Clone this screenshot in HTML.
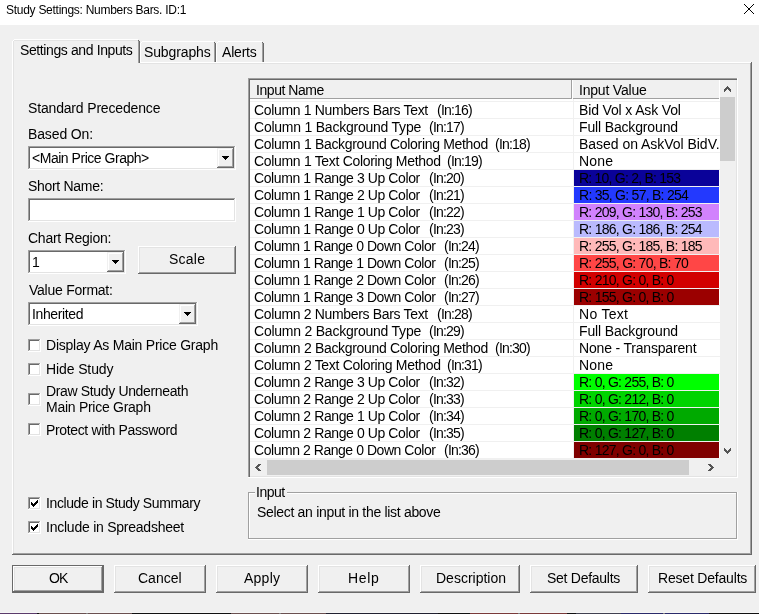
<!DOCTYPE html>
<html><head><meta charset="utf-8"><style>
html,body{margin:0;padding:0;}
body{width:759px;height:614px;overflow:hidden;background:#f0f0f0;position:relative;font-family:"Liberation Sans",sans-serif;}
i{position:absolute;display:block;}
b{will-change:transform;position:absolute;font-weight:normal;white-space:pre;font-size:14px;line-height:15px;color:#000;}
svg{display:block;}
</style></head><body>
<i style="left:0px;top:0px;width:759px;height:25px;background:#ffffff"></i>
<b style="left:6px;top:3px;font-size:12px;letter-spacing:-0.273px">Study Settings: Numbers Bars. ID:1</b>
<i style="left:744px;top:4px;width:1px;height:1px;background:#000"></i>
<i style="left:753px;top:4px;width:1px;height:1px;background:#000"></i>
<i style="left:745px;top:5px;width:1px;height:1px;background:#000"></i>
<i style="left:752px;top:5px;width:1px;height:1px;background:#000"></i>
<i style="left:746px;top:6px;width:1px;height:1px;background:#000"></i>
<i style="left:751px;top:6px;width:1px;height:1px;background:#000"></i>
<i style="left:747px;top:7px;width:1px;height:1px;background:#000"></i>
<i style="left:750px;top:7px;width:1px;height:1px;background:#000"></i>
<i style="left:748px;top:8px;width:1px;height:1px;background:#000"></i>
<i style="left:749px;top:8px;width:1px;height:1px;background:#000"></i>
<i style="left:749px;top:9px;width:1px;height:1px;background:#000"></i>
<i style="left:748px;top:9px;width:1px;height:1px;background:#000"></i>
<i style="left:750px;top:10px;width:1px;height:1px;background:#000"></i>
<i style="left:747px;top:10px;width:1px;height:1px;background:#000"></i>
<i style="left:751px;top:11px;width:1px;height:1px;background:#000"></i>
<i style="left:746px;top:11px;width:1px;height:1px;background:#000"></i>
<i style="left:752px;top:12px;width:1px;height:1px;background:#000"></i>
<i style="left:745px;top:12px;width:1px;height:1px;background:#000"></i>
<i style="left:753px;top:13px;width:1px;height:1px;background:#000"></i>
<i style="left:744px;top:13px;width:1px;height:1px;background:#000"></i>
<i style="left:12px;top:62px;width:739px;height:1px;background:#ffffff"></i>
<i style="left:12px;top:62px;width:1px;height:492px;background:#ffffff"></i>
<i style="left:750px;top:63px;width:1px;height:491px;background:#a0a0a0"></i>
<i style="left:751px;top:62px;width:1px;height:493px;background:#696969"></i>
<i style="left:13px;top:553px;width:738px;height:1px;background:#a0a0a0"></i>
<i style="left:12px;top:554px;width:740px;height:1px;background:#696969"></i>
<i style="left:140px;top:63px;width:610px;height:1px;background:#e3e3e3"></i>
<i style="left:13px;top:63px;width:1px;height:490px;background:#e3e3e3"></i>
<i style="left:140px;top:41px;width:76px;height:21px;background:#f0f0f0"></i>
<i style="left:142px;top:41px;width:72px;height:1px;background:#ffffff"></i>
<i style="left:140px;top:43px;width:1px;height:19px;background:#ffffff"></i>
<i style="left:141px;top:42px;width:1px;height:1px;background:#ffffff"></i>
<i style="left:214px;top:43px;width:1px;height:19px;background:#a0a0a0"></i>
<i style="left:215px;top:43px;width:1px;height:19px;background:#696969"></i>
<i style="left:214px;top:42px;width:1px;height:1px;background:#696969"></i>
<b style="left:144px;top:45px;font-size:14px;letter-spacing:-0.125px">Subgraphs</b>
<i style="left:216px;top:41px;width:48px;height:21px;background:#f0f0f0"></i>
<i style="left:218px;top:41px;width:44px;height:1px;background:#ffffff"></i>
<i style="left:216px;top:43px;width:1px;height:19px;background:#ffffff"></i>
<i style="left:217px;top:42px;width:1px;height:1px;background:#ffffff"></i>
<i style="left:262px;top:43px;width:1px;height:19px;background:#a0a0a0"></i>
<i style="left:263px;top:43px;width:1px;height:19px;background:#696969"></i>
<i style="left:262px;top:42px;width:1px;height:1px;background:#696969"></i>
<b style="left:222px;top:45px;font-size:14px;letter-spacing:-0.2px">Alerts</b>
<i style="left:12px;top:39px;width:128px;height:24px;background:#f0f0f0"></i>
<i style="left:14px;top:39px;width:124px;height:1px;background:#ffffff"></i>
<i style="left:12px;top:41px;width:1px;height:22px;background:#ffffff"></i>
<i style="left:13px;top:40px;width:1px;height:1px;background:#ffffff"></i>
<i style="left:138px;top:41px;width:1px;height:22px;background:#a0a0a0"></i>
<i style="left:139px;top:41px;width:1px;height:22px;background:#696969"></i>
<i style="left:138px;top:40px;width:1px;height:1px;background:#696969"></i>
<i style="left:13px;top:41px;width:1px;height:23px;background:#e3e3e3"></i>
<i style="left:14px;top:40px;width:124px;height:1px;background:#e3e3e3"></i>
<b style="left:20px;top:43px;font-size:14px;letter-spacing:-0.389px">Settings and Inputs</b>
<b style="left:28px;top:101px;font-size:14px;letter-spacing:-0.167px">Standard Precedence</b>
<b style="left:28px;top:127px;font-size:14px;letter-spacing:-0.125px">Based On:</b>
<i style="left:28px;top:146px;width:208px;height:24px;background:#fff"></i>
<i style="left:28px;top:146px;width:208px;height:1px;background:#a0a0a0"></i>
<i style="left:28px;top:146px;width:1px;height:24px;background:#a0a0a0"></i>
<i style="left:28px;top:169px;width:208px;height:1px;background:#ffffff"></i>
<i style="left:235px;top:146px;width:1px;height:24px;background:#ffffff"></i>
<i style="left:29px;top:147px;width:206px;height:1px;background:#696969"></i>
<i style="left:29px;top:147px;width:1px;height:22px;background:#696969"></i>
<i style="left:29px;top:168px;width:206px;height:1px;background:#e3e3e3"></i>
<i style="left:234px;top:147px;width:1px;height:22px;background:#e3e3e3"></i>
<i style="left:217px;top:148px;width:17px;height:20px;background:#f0f0f0"></i>
<i style="left:217px;top:167px;width:17px;height:1px;background:#696969"></i>
<i style="left:233px;top:148px;width:1px;height:20px;background:#696969"></i>
<i style="left:218px;top:149px;width:15px;height:1px;background:#ffffff"></i>
<i style="left:218px;top:149px;width:1px;height:18px;background:#ffffff"></i>
<i style="left:218px;top:166px;width:15px;height:1px;background:#a0a0a0"></i>
<i style="left:232px;top:149px;width:1px;height:18px;background:#a0a0a0"></i>
<i style="left:222px;top:156px;width:7px;height:1px;background:#000"></i>
<i style="left:223px;top:157px;width:5px;height:1px;background:#000"></i>
<i style="left:224px;top:158px;width:3px;height:1px;background:#000"></i>
<i style="left:225px;top:159px;width:1px;height:1px;background:#000"></i>
<b style="left:32px;top:151px;font-size:14px;letter-spacing:-0.471px">&lt;Main Price Graph&gt;</b>
<b style="left:28px;top:179px;font-size:14px;letter-spacing:-0.3px">Short Name:</b>
<i style="left:28px;top:198px;width:208px;height:24px;background:#fff"></i>
<i style="left:28px;top:198px;width:208px;height:1px;background:#a0a0a0"></i>
<i style="left:28px;top:198px;width:1px;height:24px;background:#a0a0a0"></i>
<i style="left:28px;top:221px;width:208px;height:1px;background:#ffffff"></i>
<i style="left:235px;top:198px;width:1px;height:24px;background:#ffffff"></i>
<i style="left:29px;top:199px;width:206px;height:1px;background:#696969"></i>
<i style="left:29px;top:199px;width:1px;height:22px;background:#696969"></i>
<i style="left:29px;top:220px;width:206px;height:1px;background:#e3e3e3"></i>
<i style="left:234px;top:199px;width:1px;height:22px;background:#e3e3e3"></i>
<b style="left:28px;top:231px;font-size:14px;letter-spacing:-0.25px">Chart Region:</b>
<i style="left:28px;top:250px;width:98px;height:24px;background:#fff"></i>
<i style="left:28px;top:250px;width:98px;height:1px;background:#a0a0a0"></i>
<i style="left:28px;top:250px;width:1px;height:24px;background:#a0a0a0"></i>
<i style="left:28px;top:273px;width:98px;height:1px;background:#ffffff"></i>
<i style="left:125px;top:250px;width:1px;height:24px;background:#ffffff"></i>
<i style="left:29px;top:251px;width:96px;height:1px;background:#696969"></i>
<i style="left:29px;top:251px;width:1px;height:22px;background:#696969"></i>
<i style="left:29px;top:272px;width:96px;height:1px;background:#e3e3e3"></i>
<i style="left:124px;top:251px;width:1px;height:22px;background:#e3e3e3"></i>
<i style="left:107px;top:252px;width:17px;height:20px;background:#f0f0f0"></i>
<i style="left:107px;top:271px;width:17px;height:1px;background:#696969"></i>
<i style="left:123px;top:252px;width:1px;height:20px;background:#696969"></i>
<i style="left:108px;top:253px;width:15px;height:1px;background:#ffffff"></i>
<i style="left:108px;top:253px;width:1px;height:18px;background:#ffffff"></i>
<i style="left:108px;top:270px;width:15px;height:1px;background:#a0a0a0"></i>
<i style="left:122px;top:253px;width:1px;height:18px;background:#a0a0a0"></i>
<i style="left:112px;top:260px;width:7px;height:1px;background:#000"></i>
<i style="left:113px;top:261px;width:5px;height:1px;background:#000"></i>
<i style="left:114px;top:262px;width:3px;height:1px;background:#000"></i>
<i style="left:115px;top:263px;width:1px;height:1px;background:#000"></i>
<b style="left:32px;top:255px;font-size:14px;letter-spacing:0px">1</b>
<i style="left:138px;top:246px;width:98px;height:28px;background:#f0f0f0"></i>
<i style="left:138px;top:246px;width:98px;height:1px;background:#ffffff"></i>
<i style="left:138px;top:246px;width:1px;height:28px;background:#ffffff"></i>
<i style="left:138px;top:273px;width:98px;height:1px;background:#696969"></i>
<i style="left:235px;top:246px;width:1px;height:28px;background:#696969"></i>
<i style="left:139px;top:247px;width:96px;height:1px;background:#e3e3e3"></i>
<i style="left:139px;top:247px;width:1px;height:26px;background:#e3e3e3"></i>
<i style="left:139px;top:272px;width:96px;height:1px;background:#a0a0a0"></i>
<i style="left:234px;top:247px;width:1px;height:26px;background:#a0a0a0"></i>
<b style="left:169px;top:252px;font-size:14px;letter-spacing:0.25px">Scale</b>
<b style="left:29px;top:283px;font-size:14px;letter-spacing:-0.25px">Value Format:</b>
<i style="left:28px;top:302px;width:170px;height:24px;background:#fff"></i>
<i style="left:28px;top:302px;width:170px;height:1px;background:#a0a0a0"></i>
<i style="left:28px;top:302px;width:1px;height:24px;background:#a0a0a0"></i>
<i style="left:28px;top:325px;width:170px;height:1px;background:#ffffff"></i>
<i style="left:197px;top:302px;width:1px;height:24px;background:#ffffff"></i>
<i style="left:29px;top:303px;width:168px;height:1px;background:#696969"></i>
<i style="left:29px;top:303px;width:1px;height:22px;background:#696969"></i>
<i style="left:29px;top:324px;width:168px;height:1px;background:#e3e3e3"></i>
<i style="left:196px;top:303px;width:1px;height:22px;background:#e3e3e3"></i>
<i style="left:179px;top:304px;width:17px;height:20px;background:#f0f0f0"></i>
<i style="left:179px;top:323px;width:17px;height:1px;background:#696969"></i>
<i style="left:195px;top:304px;width:1px;height:20px;background:#696969"></i>
<i style="left:180px;top:305px;width:15px;height:1px;background:#ffffff"></i>
<i style="left:180px;top:305px;width:1px;height:18px;background:#ffffff"></i>
<i style="left:180px;top:322px;width:15px;height:1px;background:#a0a0a0"></i>
<i style="left:194px;top:305px;width:1px;height:18px;background:#a0a0a0"></i>
<i style="left:184px;top:312px;width:7px;height:1px;background:#000"></i>
<i style="left:185px;top:313px;width:5px;height:1px;background:#000"></i>
<i style="left:186px;top:314px;width:3px;height:1px;background:#000"></i>
<i style="left:187px;top:315px;width:1px;height:1px;background:#000"></i>
<b style="left:32px;top:307px;font-size:14px;letter-spacing:-0.375px">Inherited</b>
<i style="left:28px;top:339px;width:13px;height:13px;background:#fff"></i>
<i style="left:28px;top:339px;width:13px;height:1px;background:#a0a0a0"></i>
<i style="left:28px;top:339px;width:1px;height:13px;background:#a0a0a0"></i>
<i style="left:28px;top:351px;width:13px;height:1px;background:#ffffff"></i>
<i style="left:40px;top:339px;width:1px;height:13px;background:#ffffff"></i>
<i style="left:29px;top:340px;width:11px;height:1px;background:#696969"></i>
<i style="left:29px;top:340px;width:1px;height:11px;background:#696969"></i>
<i style="left:29px;top:350px;width:11px;height:1px;background:#e3e3e3"></i>
<i style="left:39px;top:340px;width:1px;height:11px;background:#e3e3e3"></i>
<b style="left:46px;top:338px;font-size:14px;letter-spacing:-0.231px">Display As Main Price Graph</b>
<i style="left:28px;top:363px;width:13px;height:13px;background:#fff"></i>
<i style="left:28px;top:363px;width:13px;height:1px;background:#a0a0a0"></i>
<i style="left:28px;top:363px;width:1px;height:13px;background:#a0a0a0"></i>
<i style="left:28px;top:375px;width:13px;height:1px;background:#ffffff"></i>
<i style="left:40px;top:363px;width:1px;height:13px;background:#ffffff"></i>
<i style="left:29px;top:364px;width:11px;height:1px;background:#696969"></i>
<i style="left:29px;top:364px;width:1px;height:11px;background:#696969"></i>
<i style="left:29px;top:374px;width:11px;height:1px;background:#e3e3e3"></i>
<i style="left:39px;top:364px;width:1px;height:11px;background:#e3e3e3"></i>
<b style="left:46px;top:362px;font-size:14px;letter-spacing:-0.111px">Hide Study</b>
<i style="left:28px;top:393px;width:13px;height:13px;background:#fff"></i>
<i style="left:28px;top:393px;width:13px;height:1px;background:#a0a0a0"></i>
<i style="left:28px;top:393px;width:1px;height:13px;background:#a0a0a0"></i>
<i style="left:28px;top:405px;width:13px;height:1px;background:#ffffff"></i>
<i style="left:40px;top:393px;width:1px;height:13px;background:#ffffff"></i>
<i style="left:29px;top:394px;width:11px;height:1px;background:#696969"></i>
<i style="left:29px;top:394px;width:1px;height:11px;background:#696969"></i>
<i style="left:29px;top:404px;width:11px;height:1px;background:#e3e3e3"></i>
<i style="left:39px;top:394px;width:1px;height:11px;background:#e3e3e3"></i>
<b style="left:46px;top:384px;font-size:14px;letter-spacing:-0.35px">Draw Study Underneath</b>
<b style="left:46px;top:400px;font-size:14px;letter-spacing:-0.267px">Main Price Graph</b>
<i style="left:28px;top:423px;width:13px;height:13px;background:#fff"></i>
<i style="left:28px;top:423px;width:13px;height:1px;background:#a0a0a0"></i>
<i style="left:28px;top:423px;width:1px;height:13px;background:#a0a0a0"></i>
<i style="left:28px;top:435px;width:13px;height:1px;background:#ffffff"></i>
<i style="left:40px;top:423px;width:1px;height:13px;background:#ffffff"></i>
<i style="left:29px;top:424px;width:11px;height:1px;background:#696969"></i>
<i style="left:29px;top:424px;width:1px;height:11px;background:#696969"></i>
<i style="left:29px;top:434px;width:11px;height:1px;background:#e3e3e3"></i>
<i style="left:39px;top:424px;width:1px;height:11px;background:#e3e3e3"></i>
<b style="left:46px;top:423px;font-size:14px;letter-spacing:-0.35px">Protect with Password</b>
<i style="left:28px;top:497px;width:13px;height:13px;background:#fff"></i>
<i style="left:28px;top:497px;width:13px;height:1px;background:#a0a0a0"></i>
<i style="left:28px;top:497px;width:1px;height:13px;background:#a0a0a0"></i>
<i style="left:28px;top:509px;width:13px;height:1px;background:#ffffff"></i>
<i style="left:40px;top:497px;width:1px;height:13px;background:#ffffff"></i>
<i style="left:29px;top:498px;width:11px;height:1px;background:#696969"></i>
<i style="left:29px;top:498px;width:1px;height:11px;background:#696969"></i>
<i style="left:29px;top:508px;width:11px;height:1px;background:#e3e3e3"></i>
<i style="left:39px;top:498px;width:1px;height:11px;background:#e3e3e3"></i>
<i style="left:37px;top:500px;width:1px;height:1px;background:#000"></i>
<i style="left:36px;top:501px;width:1px;height:1px;background:#000"></i>
<i style="left:37px;top:501px;width:1px;height:1px;background:#000"></i>
<i style="left:31px;top:502px;width:1px;height:1px;background:#000"></i>
<i style="left:35px;top:502px;width:1px;height:1px;background:#000"></i>
<i style="left:36px;top:502px;width:1px;height:1px;background:#000"></i>
<i style="left:37px;top:502px;width:1px;height:1px;background:#000"></i>
<i style="left:31px;top:503px;width:1px;height:1px;background:#000"></i>
<i style="left:32px;top:503px;width:1px;height:1px;background:#000"></i>
<i style="left:34px;top:503px;width:1px;height:1px;background:#000"></i>
<i style="left:35px;top:503px;width:1px;height:1px;background:#000"></i>
<i style="left:36px;top:503px;width:1px;height:1px;background:#000"></i>
<i style="left:31px;top:504px;width:1px;height:1px;background:#000"></i>
<i style="left:32px;top:504px;width:1px;height:1px;background:#000"></i>
<i style="left:33px;top:504px;width:1px;height:1px;background:#000"></i>
<i style="left:34px;top:504px;width:1px;height:1px;background:#000"></i>
<i style="left:35px;top:504px;width:1px;height:1px;background:#000"></i>
<i style="left:32px;top:505px;width:1px;height:1px;background:#000"></i>
<i style="left:33px;top:505px;width:1px;height:1px;background:#000"></i>
<i style="left:34px;top:505px;width:1px;height:1px;background:#000"></i>
<i style="left:33px;top:506px;width:1px;height:1px;background:#000"></i>
<b style="left:46px;top:496px;font-size:14px;letter-spacing:-0.391px">Include in Study Summary</b>
<i style="left:28px;top:521px;width:13px;height:13px;background:#fff"></i>
<i style="left:28px;top:521px;width:13px;height:1px;background:#a0a0a0"></i>
<i style="left:28px;top:521px;width:1px;height:13px;background:#a0a0a0"></i>
<i style="left:28px;top:533px;width:13px;height:1px;background:#ffffff"></i>
<i style="left:40px;top:521px;width:1px;height:13px;background:#ffffff"></i>
<i style="left:29px;top:522px;width:11px;height:1px;background:#696969"></i>
<i style="left:29px;top:522px;width:1px;height:11px;background:#696969"></i>
<i style="left:29px;top:532px;width:11px;height:1px;background:#e3e3e3"></i>
<i style="left:39px;top:522px;width:1px;height:11px;background:#e3e3e3"></i>
<i style="left:37px;top:524px;width:1px;height:1px;background:#000"></i>
<i style="left:36px;top:525px;width:1px;height:1px;background:#000"></i>
<i style="left:37px;top:525px;width:1px;height:1px;background:#000"></i>
<i style="left:31px;top:526px;width:1px;height:1px;background:#000"></i>
<i style="left:35px;top:526px;width:1px;height:1px;background:#000"></i>
<i style="left:36px;top:526px;width:1px;height:1px;background:#000"></i>
<i style="left:37px;top:526px;width:1px;height:1px;background:#000"></i>
<i style="left:31px;top:527px;width:1px;height:1px;background:#000"></i>
<i style="left:32px;top:527px;width:1px;height:1px;background:#000"></i>
<i style="left:34px;top:527px;width:1px;height:1px;background:#000"></i>
<i style="left:35px;top:527px;width:1px;height:1px;background:#000"></i>
<i style="left:36px;top:527px;width:1px;height:1px;background:#000"></i>
<i style="left:31px;top:528px;width:1px;height:1px;background:#000"></i>
<i style="left:32px;top:528px;width:1px;height:1px;background:#000"></i>
<i style="left:33px;top:528px;width:1px;height:1px;background:#000"></i>
<i style="left:34px;top:528px;width:1px;height:1px;background:#000"></i>
<i style="left:35px;top:528px;width:1px;height:1px;background:#000"></i>
<i style="left:32px;top:529px;width:1px;height:1px;background:#000"></i>
<i style="left:33px;top:529px;width:1px;height:1px;background:#000"></i>
<i style="left:34px;top:529px;width:1px;height:1px;background:#000"></i>
<i style="left:33px;top:530px;width:1px;height:1px;background:#000"></i>
<b style="left:46px;top:520px;font-size:14px;letter-spacing:-0.238px">Include in Spreadsheet</b>
<i style="left:248px;top:78px;width:490px;height:400px;background:#ffffff"></i>
<i style="left:248px;top:78px;width:490px;height:1px;background:#a0a0a0"></i>
<i style="left:248px;top:78px;width:1px;height:400px;background:#a0a0a0"></i>
<i style="left:249px;top:79px;width:488px;height:1px;background:#696969"></i>
<i style="left:249px;top:79px;width:1px;height:398px;background:#696969"></i>
<i style="left:248px;top:477px;width:490px;height:1px;background:#ffffff"></i>
<i style="left:737px;top:78px;width:1px;height:400px;background:#ffffff"></i>
<i style="left:250px;top:476px;width:487px;height:1px;background:#e3e3e3"></i>
<i style="left:736px;top:80px;width:1px;height:397px;background:#e3e3e3"></i>
<i style="left:250px;top:80px;width:470px;height:19px;background:#f0f0f0"></i>
<i style="left:250px;top:98px;width:322px;height:1px;background:#a0a0a0"></i>
<i style="left:571px;top:80px;width:1px;height:19px;background:#a0a0a0"></i>
<i style="left:572px;top:80px;width:1px;height:19px;background:#ffffff"></i>
<i style="left:573px;top:98px;width:146px;height:1px;background:#a0a0a0"></i>
<i style="left:719px;top:80px;width:1px;height:19px;background:#ffffff"></i>
<b style="left:256px;top:83px;font-size:14px;letter-spacing:-0.444px">Input Name</b>
<b style="left:579px;top:83px;font-size:14px;letter-spacing:-0.2px">Input Value</b>
<i style="left:250px;top:101px;width:470px;height:1px;background:#f0f0f0"></i>
<b style="left:254px;top:103px;font-size:14px;letter-spacing:-0.336px">Column 1 Numbers Bars Text</b>
<b style="left:437px;top:103px;font-size:14px;letter-spacing:-0.783px">(In:16)</b>
<b style="left:579px;top:103px;font-size:14px;letter-spacing:-0.144px;width:140px;overflow:hidden">Bid Vol x Ask Vol</b>
<i style="left:250px;top:118px;width:470px;height:1px;background:#f0f0f0"></i>
<b style="left:254px;top:120px;font-size:14px;letter-spacing:-0.23px">Column 1 Background Type</b>
<b style="left:429px;top:120px;font-size:14px;letter-spacing:-0.783px">(In:17)</b>
<b style="left:579px;top:120px;font-size:14px;letter-spacing:-0.15px;width:140px;overflow:hidden">Full Background</b>
<i style="left:250px;top:135px;width:470px;height:1px;background:#f0f0f0"></i>
<b style="left:254px;top:137px;font-size:14px;letter-spacing:-0.318px">Column 1 Background Coloring Method</b>
<b style="left:495px;top:137px;font-size:14px;letter-spacing:-0.783px">(In:18)</b>
<b style="left:579px;top:137px;font-size:14px;letter-spacing:-0.03px;width:140px;overflow:hidden">Based on AskVol BidV.</b>
<i style="left:250px;top:152px;width:470px;height:1px;background:#f0f0f0"></i>
<b style="left:254px;top:154px;font-size:14px;letter-spacing:-0.318px">Column 1 Text Coloring Method</b>
<b style="left:447px;top:154px;font-size:14px;letter-spacing:-0.783px">(In:19)</b>
<b style="left:579px;top:154px;font-size:14px;letter-spacing:0.2px;width:140px;overflow:hidden">None</b>
<i style="left:250px;top:169px;width:470px;height:1px;background:#f0f0f0"></i>
<i style="left:574px;top:170px;width:145px;height:16px;background:rgb(10,2,153)"></i>
<b style="left:254px;top:171px;font-size:14px;letter-spacing:-0.404px">Column 1 Range 3 Up Color</b>
<b style="left:429px;top:171px;font-size:14px;letter-spacing:-0.783px">(In:20)</b>
<b style="left:579px;top:171px;font-size:14px;letter-spacing:-0.772px;width:140px;overflow:hidden">R: 10, G: 2, B: 153</b>
<i style="left:250px;top:186px;width:470px;height:1px;background:#f0f0f0"></i>
<i style="left:574px;top:187px;width:145px;height:16px;background:rgb(35,57,254)"></i>
<b style="left:254px;top:188px;font-size:14px;letter-spacing:-0.404px">Column 1 Range 2 Up Color</b>
<b style="left:429px;top:188px;font-size:14px;letter-spacing:-0.783px">(In:21)</b>
<b style="left:579px;top:188px;font-size:14px;letter-spacing:-0.732px;width:140px;overflow:hidden">R: 35, G: 57, B: 254</b>
<i style="left:250px;top:203px;width:470px;height:1px;background:#f0f0f0"></i>
<i style="left:574px;top:204px;width:145px;height:16px;background:rgb(209,130,253)"></i>
<b style="left:254px;top:205px;font-size:14px;letter-spacing:-0.404px">Column 1 Range 1 Up Color</b>
<b style="left:429px;top:205px;font-size:14px;letter-spacing:-0.783px">(In:22)</b>
<b style="left:579px;top:205px;font-size:14px;letter-spacing:-0.752px;width:140px;overflow:hidden">R: 209, G: 130, B: 253</b>
<i style="left:250px;top:220px;width:470px;height:1px;background:#f0f0f0"></i>
<i style="left:574px;top:221px;width:145px;height:16px;background:rgb(186,186,254)"></i>
<b style="left:254px;top:222px;font-size:14px;letter-spacing:-0.404px">Column 1 Range 0 Up Color</b>
<b style="left:429px;top:222px;font-size:14px;letter-spacing:-0.783px">(In:23)</b>
<b style="left:579px;top:222px;font-size:14px;letter-spacing:-0.752px;width:140px;overflow:hidden">R: 186, G: 186, B: 254</b>
<i style="left:250px;top:237px;width:470px;height:1px;background:#f0f0f0"></i>
<i style="left:574px;top:238px;width:145px;height:16px;background:rgb(255,185,185)"></i>
<b style="left:254px;top:239px;font-size:14px;letter-spacing:-0.454px">Column 1 Range 0 Down Color</b>
<b style="left:444px;top:239px;font-size:14px;letter-spacing:-0.783px">(In:24)</b>
<b style="left:579px;top:239px;font-size:14px;letter-spacing:-0.752px;width:140px;overflow:hidden">R: 255, G: 185, B: 185</b>
<i style="left:250px;top:254px;width:470px;height:1px;background:#f0f0f0"></i>
<i style="left:574px;top:255px;width:145px;height:16px;background:rgb(255,70,70)"></i>
<b style="left:254px;top:256px;font-size:14px;letter-spacing:-0.454px">Column 1 Range 1 Down Color</b>
<b style="left:444px;top:256px;font-size:14px;letter-spacing:-0.783px">(In:25)</b>
<b style="left:579px;top:256px;font-size:14px;letter-spacing:-0.737px;width:140px;overflow:hidden">R: 255, G: 70, B: 70</b>
<i style="left:250px;top:271px;width:470px;height:1px;background:#f0f0f0"></i>
<i style="left:574px;top:272px;width:145px;height:16px;background:rgb(210,0,0)"></i>
<b style="left:254px;top:273px;font-size:14px;letter-spacing:-0.454px">Column 1 Range 2 Down Color</b>
<b style="left:444px;top:273px;font-size:14px;letter-spacing:-0.783px">(In:26)</b>
<b style="left:579px;top:273px;font-size:14px;letter-spacing:-0.753px;width:140px;overflow:hidden">R: 210, G: 0, B: 0</b>
<i style="left:250px;top:288px;width:470px;height:1px;background:#f0f0f0"></i>
<i style="left:574px;top:289px;width:145px;height:16px;background:rgb(155,0,0)"></i>
<b style="left:254px;top:290px;font-size:14px;letter-spacing:-0.454px">Column 1 Range 3 Down Color</b>
<b style="left:444px;top:290px;font-size:14px;letter-spacing:-0.783px">(In:27)</b>
<b style="left:579px;top:290px;font-size:14px;letter-spacing:-0.753px;width:140px;overflow:hidden">R: 155, G: 0, B: 0</b>
<i style="left:250px;top:305px;width:470px;height:1px;background:#f0f0f0"></i>
<b style="left:254px;top:307px;font-size:14px;letter-spacing:-0.336px">Column 2 Numbers Bars Text</b>
<b style="left:437px;top:307px;font-size:14px;letter-spacing:-0.783px">(In:28)</b>
<b style="left:579px;top:307px;font-size:14px;letter-spacing:0.3px;width:140px;overflow:hidden">No Text</b>
<i style="left:250px;top:322px;width:470px;height:1px;background:#f0f0f0"></i>
<b style="left:254px;top:324px;font-size:14px;letter-spacing:-0.23px">Column 2 Background Type</b>
<b style="left:429px;top:324px;font-size:14px;letter-spacing:-0.783px">(In:29)</b>
<b style="left:579px;top:324px;font-size:14px;letter-spacing:-0.15px;width:140px;overflow:hidden">Full Background</b>
<i style="left:250px;top:339px;width:470px;height:1px;background:#f0f0f0"></i>
<b style="left:254px;top:341px;font-size:14px;letter-spacing:-0.318px">Column 2 Background Coloring Method</b>
<b style="left:495px;top:341px;font-size:14px;letter-spacing:-0.783px">(In:30)</b>
<b style="left:579px;top:341px;font-size:14px;letter-spacing:-0.182px;width:140px;overflow:hidden">None - Transparent</b>
<i style="left:250px;top:356px;width:470px;height:1px;background:#f0f0f0"></i>
<b style="left:254px;top:358px;font-size:14px;letter-spacing:-0.318px">Column 2 Text Coloring Method</b>
<b style="left:447px;top:358px;font-size:14px;letter-spacing:-0.783px">(In:31)</b>
<b style="left:579px;top:358px;font-size:14px;letter-spacing:0.2px;width:140px;overflow:hidden">None</b>
<i style="left:250px;top:373px;width:470px;height:1px;background:#f0f0f0"></i>
<i style="left:574px;top:374px;width:145px;height:16px;background:rgb(0,255,0)"></i>
<b style="left:254px;top:375px;font-size:14px;letter-spacing:-0.404px">Column 2 Range 3 Up Color</b>
<b style="left:429px;top:375px;font-size:14px;letter-spacing:-0.783px">(In:32)</b>
<b style="left:579px;top:375px;font-size:14px;letter-spacing:-0.753px;width:140px;overflow:hidden">R: 0, G: 255, B: 0</b>
<i style="left:250px;top:390px;width:470px;height:1px;background:#f0f0f0"></i>
<i style="left:574px;top:391px;width:145px;height:16px;background:rgb(0,212,0)"></i>
<b style="left:254px;top:392px;font-size:14px;letter-spacing:-0.404px">Column 2 Range 2 Up Color</b>
<b style="left:429px;top:392px;font-size:14px;letter-spacing:-0.783px">(In:33)</b>
<b style="left:579px;top:392px;font-size:14px;letter-spacing:-0.753px;width:140px;overflow:hidden">R: 0, G: 212, B: 0</b>
<i style="left:250px;top:407px;width:470px;height:1px;background:#f0f0f0"></i>
<i style="left:574px;top:408px;width:145px;height:16px;background:rgb(0,170,0)"></i>
<b style="left:254px;top:409px;font-size:14px;letter-spacing:-0.404px">Column 2 Range 1 Up Color</b>
<b style="left:429px;top:409px;font-size:14px;letter-spacing:-0.783px">(In:34)</b>
<b style="left:579px;top:409px;font-size:14px;letter-spacing:-0.753px;width:140px;overflow:hidden">R: 0, G: 170, B: 0</b>
<i style="left:250px;top:424px;width:470px;height:1px;background:#f0f0f0"></i>
<i style="left:574px;top:425px;width:145px;height:16px;background:rgb(0,127,0)"></i>
<b style="left:254px;top:426px;font-size:14px;letter-spacing:-0.404px">Column 2 Range 0 Up Color</b>
<b style="left:429px;top:426px;font-size:14px;letter-spacing:-0.783px">(In:35)</b>
<b style="left:579px;top:426px;font-size:14px;letter-spacing:-0.753px;width:140px;overflow:hidden">R: 0, G: 127, B: 0</b>
<i style="left:250px;top:441px;width:470px;height:1px;background:#f0f0f0"></i>
<i style="left:574px;top:442px;width:145px;height:16px;background:rgb(127,0,0)"></i>
<b style="left:254px;top:443px;font-size:14px;letter-spacing:-0.454px">Column 2 Range 0 Down Color</b>
<b style="left:444px;top:443px;font-size:14px;letter-spacing:-0.783px">(In:36)</b>
<b style="left:579px;top:443px;font-size:14px;letter-spacing:-0.753px;width:140px;overflow:hidden">R: 127, G: 0, B: 0</b>
<i style="left:250px;top:458px;width:470px;height:1px;background:#f0f0f0"></i>
<i style="left:573px;top:99px;width:1px;height:360px;background:#f0f0f0"></i>
<i style="left:720px;top:80px;width:16px;height:379px;background:#f0f0f0"></i>
<i style="left:720px;top:97px;width:15px;height:64px;background:#cdcdcd"></i>
<i style="left:250px;top:459px;width:486px;height:17px;background:#f0f0f0"></i>
<i style="left:267px;top:460px;width:422px;height:15px;background:#cdcdcd"></i>
<i style="left:724px;top:89px;width:1px;height:1px;background:#555555"></i>
<i style="left:724px;top:450px;width:1px;height:1px;background:#555555"></i>
<i style="left:258px;top:464px;width:1px;height:1px;background:#555555"></i>
<i style="left:710px;top:464px;width:1px;height:1px;background:#555555"></i>
<i style="left:724px;top:90px;width:1px;height:1px;background:#555555"></i>
<i style="left:724px;top:449px;width:1px;height:1px;background:#555555"></i>
<i style="left:259px;top:464px;width:1px;height:1px;background:#555555"></i>
<i style="left:709px;top:464px;width:1px;height:1px;background:#555555"></i>
<i style="left:724px;top:91px;width:1px;height:1px;background:#555555"></i>
<i style="left:724px;top:448px;width:1px;height:1px;background:#555555"></i>
<i style="left:260px;top:464px;width:1px;height:1px;background:#555555"></i>
<i style="left:708px;top:464px;width:1px;height:1px;background:#555555"></i>
<i style="left:725px;top:88px;width:1px;height:1px;background:#555555"></i>
<i style="left:725px;top:451px;width:1px;height:1px;background:#555555"></i>
<i style="left:257px;top:465px;width:1px;height:1px;background:#555555"></i>
<i style="left:711px;top:465px;width:1px;height:1px;background:#555555"></i>
<i style="left:725px;top:89px;width:1px;height:1px;background:#555555"></i>
<i style="left:725px;top:450px;width:1px;height:1px;background:#555555"></i>
<i style="left:258px;top:465px;width:1px;height:1px;background:#555555"></i>
<i style="left:710px;top:465px;width:1px;height:1px;background:#555555"></i>
<i style="left:725px;top:90px;width:1px;height:1px;background:#555555"></i>
<i style="left:725px;top:449px;width:1px;height:1px;background:#555555"></i>
<i style="left:259px;top:465px;width:1px;height:1px;background:#555555"></i>
<i style="left:709px;top:465px;width:1px;height:1px;background:#555555"></i>
<i style="left:726px;top:87px;width:1px;height:1px;background:#555555"></i>
<i style="left:726px;top:452px;width:1px;height:1px;background:#555555"></i>
<i style="left:256px;top:466px;width:1px;height:1px;background:#555555"></i>
<i style="left:712px;top:466px;width:1px;height:1px;background:#555555"></i>
<i style="left:726px;top:88px;width:1px;height:1px;background:#555555"></i>
<i style="left:726px;top:451px;width:1px;height:1px;background:#555555"></i>
<i style="left:257px;top:466px;width:1px;height:1px;background:#555555"></i>
<i style="left:711px;top:466px;width:1px;height:1px;background:#555555"></i>
<i style="left:726px;top:89px;width:1px;height:1px;background:#555555"></i>
<i style="left:726px;top:450px;width:1px;height:1px;background:#555555"></i>
<i style="left:258px;top:466px;width:1px;height:1px;background:#555555"></i>
<i style="left:710px;top:466px;width:1px;height:1px;background:#555555"></i>
<i style="left:727px;top:86px;width:1px;height:1px;background:#555555"></i>
<i style="left:727px;top:453px;width:1px;height:1px;background:#555555"></i>
<i style="left:255px;top:467px;width:1px;height:1px;background:#555555"></i>
<i style="left:713px;top:467px;width:1px;height:1px;background:#555555"></i>
<i style="left:727px;top:87px;width:1px;height:1px;background:#555555"></i>
<i style="left:727px;top:452px;width:1px;height:1px;background:#555555"></i>
<i style="left:256px;top:467px;width:1px;height:1px;background:#555555"></i>
<i style="left:712px;top:467px;width:1px;height:1px;background:#555555"></i>
<i style="left:727px;top:88px;width:1px;height:1px;background:#555555"></i>
<i style="left:727px;top:451px;width:1px;height:1px;background:#555555"></i>
<i style="left:257px;top:467px;width:1px;height:1px;background:#555555"></i>
<i style="left:711px;top:467px;width:1px;height:1px;background:#555555"></i>
<i style="left:728px;top:87px;width:1px;height:1px;background:#555555"></i>
<i style="left:728px;top:452px;width:1px;height:1px;background:#555555"></i>
<i style="left:256px;top:468px;width:1px;height:1px;background:#555555"></i>
<i style="left:712px;top:468px;width:1px;height:1px;background:#555555"></i>
<i style="left:728px;top:88px;width:1px;height:1px;background:#555555"></i>
<i style="left:728px;top:451px;width:1px;height:1px;background:#555555"></i>
<i style="left:257px;top:468px;width:1px;height:1px;background:#555555"></i>
<i style="left:711px;top:468px;width:1px;height:1px;background:#555555"></i>
<i style="left:728px;top:89px;width:1px;height:1px;background:#555555"></i>
<i style="left:728px;top:450px;width:1px;height:1px;background:#555555"></i>
<i style="left:258px;top:468px;width:1px;height:1px;background:#555555"></i>
<i style="left:710px;top:468px;width:1px;height:1px;background:#555555"></i>
<i style="left:729px;top:88px;width:1px;height:1px;background:#555555"></i>
<i style="left:729px;top:451px;width:1px;height:1px;background:#555555"></i>
<i style="left:257px;top:469px;width:1px;height:1px;background:#555555"></i>
<i style="left:711px;top:469px;width:1px;height:1px;background:#555555"></i>
<i style="left:729px;top:89px;width:1px;height:1px;background:#555555"></i>
<i style="left:729px;top:450px;width:1px;height:1px;background:#555555"></i>
<i style="left:258px;top:469px;width:1px;height:1px;background:#555555"></i>
<i style="left:710px;top:469px;width:1px;height:1px;background:#555555"></i>
<i style="left:729px;top:90px;width:1px;height:1px;background:#555555"></i>
<i style="left:729px;top:449px;width:1px;height:1px;background:#555555"></i>
<i style="left:259px;top:469px;width:1px;height:1px;background:#555555"></i>
<i style="left:709px;top:469px;width:1px;height:1px;background:#555555"></i>
<i style="left:730px;top:89px;width:1px;height:1px;background:#555555"></i>
<i style="left:730px;top:450px;width:1px;height:1px;background:#555555"></i>
<i style="left:258px;top:470px;width:1px;height:1px;background:#555555"></i>
<i style="left:710px;top:470px;width:1px;height:1px;background:#555555"></i>
<i style="left:730px;top:90px;width:1px;height:1px;background:#555555"></i>
<i style="left:730px;top:449px;width:1px;height:1px;background:#555555"></i>
<i style="left:259px;top:470px;width:1px;height:1px;background:#555555"></i>
<i style="left:709px;top:470px;width:1px;height:1px;background:#555555"></i>
<i style="left:730px;top:91px;width:1px;height:1px;background:#555555"></i>
<i style="left:730px;top:448px;width:1px;height:1px;background:#555555"></i>
<i style="left:260px;top:470px;width:1px;height:1px;background:#555555"></i>
<i style="left:708px;top:470px;width:1px;height:1px;background:#555555"></i>
<i style="left:248px;top:492px;width:490px;height:1px;background:#a0a0a0"></i>
<i style="left:248px;top:492px;width:1px;height:48px;background:#a0a0a0"></i>
<i style="left:249px;top:493px;width:488px;height:1px;background:#ffffff"></i>
<i style="left:249px;top:493px;width:1px;height:46px;background:#ffffff"></i>
<i style="left:248px;top:539px;width:490px;height:1px;background:#ffffff"></i>
<i style="left:737px;top:492px;width:1px;height:48px;background:#ffffff"></i>
<i style="left:249px;top:538px;width:488px;height:1px;background:#a0a0a0"></i>
<i style="left:736px;top:493px;width:1px;height:46px;background:#a0a0a0"></i>
<i style="left:255px;top:486px;width:32px;height:14px;background:#f0f0f0"></i>
<b style="left:256px;top:485px;font-size:14px;letter-spacing:-0.5px">Input</b>
<b style="left:257px;top:505px;font-size:14px;letter-spacing:-0.312px">Select an input in the list above</b>
<i style="left:12px;top:565px;width:92px;height:28px;background:#696969"></i>
<i style="left:13px;top:566px;width:90px;height:26px;background:#f0f0f0"></i>
<i style="left:13px;top:566px;width:90px;height:1px;background:#ffffff"></i>
<i style="left:13px;top:566px;width:1px;height:26px;background:#ffffff"></i>
<i style="left:13px;top:591px;width:90px;height:1px;background:#696969"></i>
<i style="left:102px;top:566px;width:1px;height:26px;background:#696969"></i>
<i style="left:14px;top:567px;width:88px;height:1px;background:#e3e3e3"></i>
<i style="left:14px;top:567px;width:1px;height:24px;background:#e3e3e3"></i>
<i style="left:14px;top:590px;width:88px;height:1px;background:#a0a0a0"></i>
<i style="left:101px;top:567px;width:1px;height:24px;background:#a0a0a0"></i>
<b style="left:49px;top:571px;font-size:14px;letter-spacing:-1.0px">OK</b>
<i style="left:114px;top:565px;width:92px;height:28px;background:#f0f0f0"></i>
<i style="left:114px;top:565px;width:92px;height:1px;background:#ffffff"></i>
<i style="left:114px;top:565px;width:1px;height:28px;background:#ffffff"></i>
<i style="left:114px;top:592px;width:92px;height:1px;background:#696969"></i>
<i style="left:205px;top:565px;width:1px;height:28px;background:#696969"></i>
<i style="left:115px;top:566px;width:90px;height:1px;background:#e3e3e3"></i>
<i style="left:115px;top:566px;width:1px;height:26px;background:#e3e3e3"></i>
<i style="left:115px;top:591px;width:90px;height:1px;background:#a0a0a0"></i>
<i style="left:204px;top:566px;width:1px;height:26px;background:#a0a0a0"></i>
<b style="left:138px;top:571px;font-size:14px;letter-spacing:0.0px">Cancel</b>
<i style="left:216px;top:565px;width:92px;height:28px;background:#f0f0f0"></i>
<i style="left:216px;top:565px;width:92px;height:1px;background:#ffffff"></i>
<i style="left:216px;top:565px;width:1px;height:28px;background:#ffffff"></i>
<i style="left:216px;top:592px;width:92px;height:1px;background:#696969"></i>
<i style="left:307px;top:565px;width:1px;height:28px;background:#696969"></i>
<i style="left:217px;top:566px;width:90px;height:1px;background:#e3e3e3"></i>
<i style="left:217px;top:566px;width:1px;height:26px;background:#e3e3e3"></i>
<i style="left:217px;top:591px;width:90px;height:1px;background:#a0a0a0"></i>
<i style="left:306px;top:566px;width:1px;height:26px;background:#a0a0a0"></i>
<b style="left:244px;top:571px;font-size:14px;letter-spacing:0.25px">Apply</b>
<i style="left:318px;top:565px;width:92px;height:28px;background:#f0f0f0"></i>
<i style="left:318px;top:565px;width:92px;height:1px;background:#ffffff"></i>
<i style="left:318px;top:565px;width:1px;height:28px;background:#ffffff"></i>
<i style="left:318px;top:592px;width:92px;height:1px;background:#696969"></i>
<i style="left:409px;top:565px;width:1px;height:28px;background:#696969"></i>
<i style="left:319px;top:566px;width:90px;height:1px;background:#e3e3e3"></i>
<i style="left:319px;top:566px;width:1px;height:26px;background:#e3e3e3"></i>
<i style="left:319px;top:591px;width:90px;height:1px;background:#a0a0a0"></i>
<i style="left:408px;top:566px;width:1px;height:26px;background:#a0a0a0"></i>
<b style="left:348px;top:571px;font-size:14px;letter-spacing:0.667px">Help</b>
<i style="left:420px;top:565px;width:100px;height:28px;background:#f0f0f0"></i>
<i style="left:420px;top:565px;width:100px;height:1px;background:#ffffff"></i>
<i style="left:420px;top:565px;width:1px;height:28px;background:#ffffff"></i>
<i style="left:420px;top:592px;width:100px;height:1px;background:#696969"></i>
<i style="left:519px;top:565px;width:1px;height:28px;background:#696969"></i>
<i style="left:421px;top:566px;width:98px;height:1px;background:#e3e3e3"></i>
<i style="left:421px;top:566px;width:1px;height:26px;background:#e3e3e3"></i>
<i style="left:421px;top:591px;width:98px;height:1px;background:#a0a0a0"></i>
<i style="left:518px;top:566px;width:1px;height:26px;background:#a0a0a0"></i>
<b style="left:436px;top:571px;font-size:14px;letter-spacing:0.0px">Description</b>
<i style="left:530px;top:565px;width:108px;height:28px;background:#f0f0f0"></i>
<i style="left:530px;top:565px;width:108px;height:1px;background:#ffffff"></i>
<i style="left:530px;top:565px;width:1px;height:28px;background:#ffffff"></i>
<i style="left:530px;top:592px;width:108px;height:1px;background:#696969"></i>
<i style="left:637px;top:565px;width:1px;height:28px;background:#696969"></i>
<i style="left:531px;top:566px;width:106px;height:1px;background:#e3e3e3"></i>
<i style="left:531px;top:566px;width:1px;height:26px;background:#e3e3e3"></i>
<i style="left:531px;top:591px;width:106px;height:1px;background:#a0a0a0"></i>
<i style="left:636px;top:566px;width:1px;height:26px;background:#a0a0a0"></i>
<b style="left:547px;top:571px;font-size:14px;letter-spacing:-0.273px">Set Defaults</b>
<i style="left:648px;top:565px;width:108px;height:28px;background:#f0f0f0"></i>
<i style="left:648px;top:565px;width:108px;height:1px;background:#ffffff"></i>
<i style="left:648px;top:565px;width:1px;height:28px;background:#ffffff"></i>
<i style="left:648px;top:592px;width:108px;height:1px;background:#696969"></i>
<i style="left:755px;top:565px;width:1px;height:28px;background:#696969"></i>
<i style="left:649px;top:566px;width:106px;height:1px;background:#e3e3e3"></i>
<i style="left:649px;top:566px;width:1px;height:26px;background:#e3e3e3"></i>
<i style="left:649px;top:591px;width:106px;height:1px;background:#a0a0a0"></i>
<i style="left:754px;top:566px;width:1px;height:26px;background:#a0a0a0"></i>
<b style="left:658px;top:571px;font-size:14px;letter-spacing:-0.192px">Reset Defaults</b>
<i style="left:0px;top:612px;width:759px;height:1px;background:#f6f6f6"></i>
<i style="left:0px;top:613px;width:37px;height:1px;background:#5b3b6b"></i>
<i style="left:37px;top:613px;width:2px;height:1px;background:#101010"></i>
<i style="left:39px;top:613px;width:47px;height:1px;background:#6a5050"></i>
<i style="left:86px;top:613px;width:2px;height:1px;background:#808080"></i>
<i style="left:88px;top:613px;width:44px;height:1px;background:#6a5050"></i>
<i style="left:132px;top:613px;width:99px;height:1px;background:#101010"></i>
<i style="left:231px;top:613px;width:48px;height:1px;background:#6a5050"></i>
<i style="left:279px;top:613px;width:2px;height:1px;background:#808080"></i>
<i style="left:281px;top:613px;width:45px;height:1px;background:#6a5050"></i>
<i style="left:326px;top:613px;width:112px;height:1px;background:#202030"></i>
<i style="left:438px;top:613px;width:32px;height:1px;background:#101010"></i>
<i style="left:470px;top:613px;width:48px;height:1px;background:#7a3a3a"></i>
<i style="left:518px;top:613px;width:2px;height:1px;background:#808080"></i>
<i style="left:520px;top:613px;width:47px;height:1px;background:#7a3a3a"></i>
<i style="left:567px;top:613px;width:9px;height:1px;background:#101010"></i>
<i style="left:576px;top:613px;width:45px;height:1px;background:#404050"></i>
<i style="left:621px;top:613px;width:42px;height:1px;background:#2a2a6a"></i>
<i style="left:663px;top:613px;width:2px;height:1px;background:#808080"></i>
<i style="left:665px;top:613px;width:44px;height:1px;background:#2a2a6a"></i>
<i style="left:709px;top:613px;width:50px;height:1px;background:#101010"></i>
</body></html>
